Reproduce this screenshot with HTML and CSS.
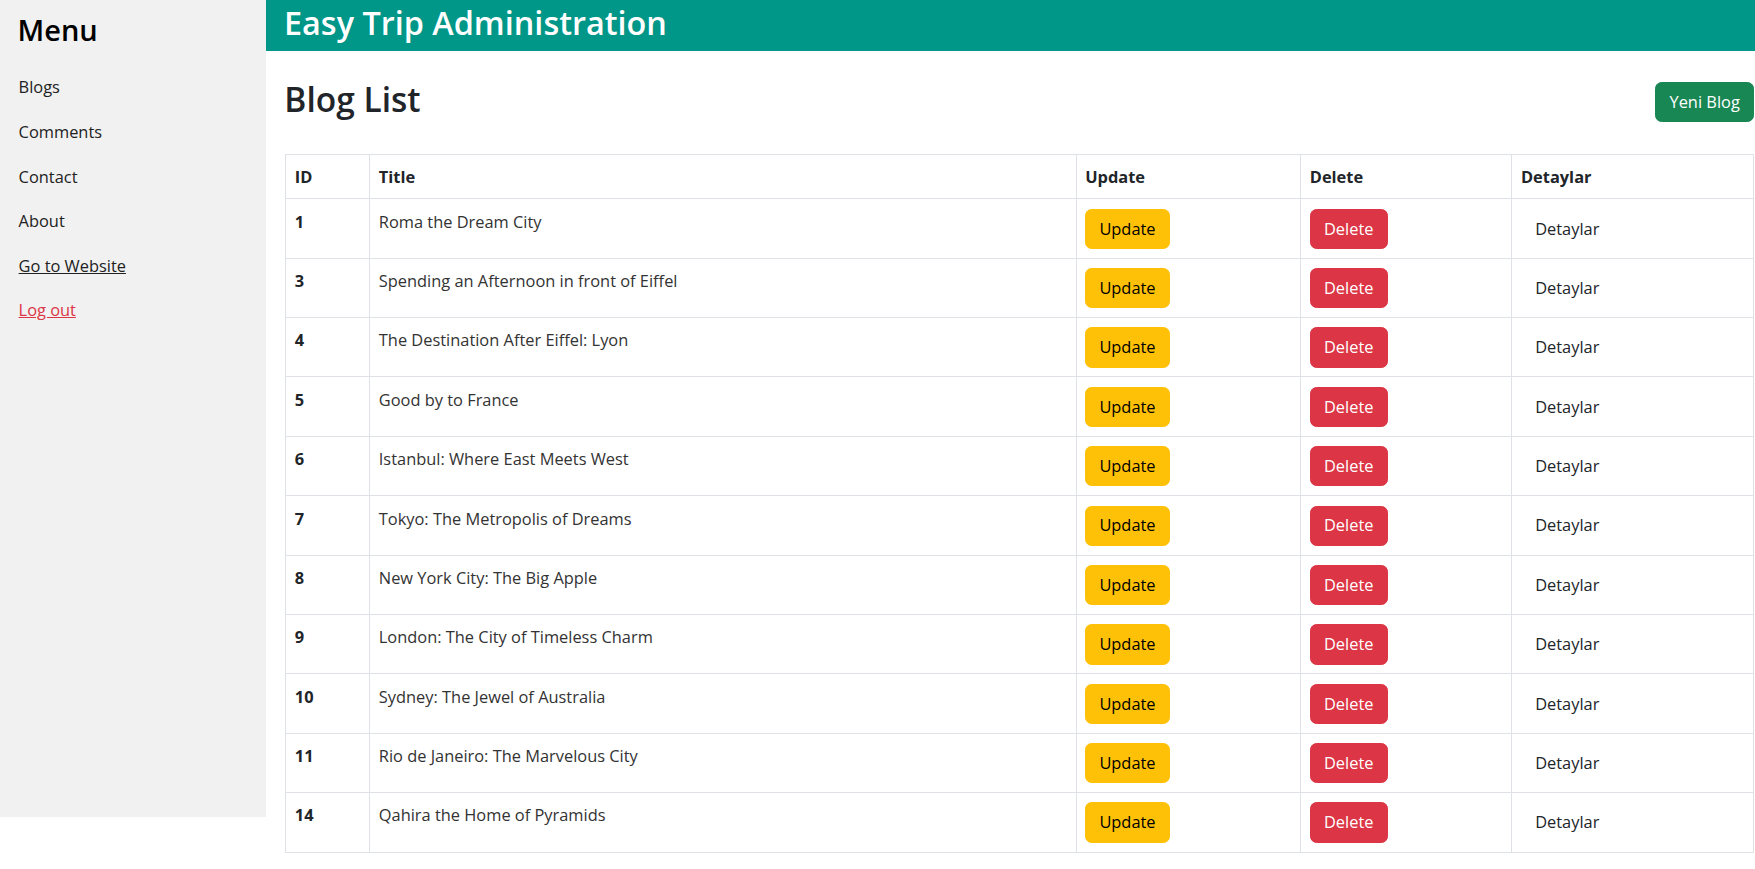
FILE: index.html
```html
<!DOCTYPE html>
<html lang="en">
<head>
<meta charset="utf-8">
<title>Easy Trip Administration</title>
<link rel="stylesheet" href="styles.css">
</head>
<body>
<nav class="sidebar">
  <h3 class="menu-title">Menu</h3>
  <a class="side-link" href="#">Blogs</a>
  <a class="side-link" href="#">Comments</a>
  <a class="side-link" href="#">Contact</a>
  <a class="side-link" href="#">About</a>
  <a class="side-link underline" href="#">Go to Website</a>
  <a class="side-link underline danger" href="#">Log out</a>
</nav>
<div class="main">
  <header class="topbar">
    <h1 class="topbar-title">Easy Trip Administration</h1>
  </header>
  <div class="content">
    <div class="page-head">
      <h2 class="page-title">Blog List</h2>
      <a class="btn btn-success btn-new" href="#">Yeni Blog</a>
    </div>
    <table class="grid">
      <colgroup>
        <col class="c-id"><col class="c-title"><col class="c-upd"><col class="c-del"><col class="c-det">
      </colgroup>
      <thead>
        <tr><th>ID</th><th>Title</th><th>Update</th><th>Delete</th><th>Detaylar</th></tr>
      </thead>
      <tbody>
        <tr><th>1</th><td>Roma the Dream City</td><td><a class="btn btn-warning" href="#">Update</a></td><td><a class="btn btn-danger" href="#">Delete</a></td><td><a class="btn btn-plain" href="#">Detaylar</a></td></tr>
        <tr><th>3</th><td>Spending an Afternoon in front of Eiffel</td><td><a class="btn btn-warning" href="#">Update</a></td><td><a class="btn btn-danger" href="#">Delete</a></td><td><a class="btn btn-plain" href="#">Detaylar</a></td></tr>
        <tr><th>4</th><td>The Destination After Eiffel: Lyon</td><td><a class="btn btn-warning" href="#">Update</a></td><td><a class="btn btn-danger" href="#">Delete</a></td><td><a class="btn btn-plain" href="#">Detaylar</a></td></tr>
        <tr><th>5</th><td>Good by to France</td><td><a class="btn btn-warning" href="#">Update</a></td><td><a class="btn btn-danger" href="#">Delete</a></td><td><a class="btn btn-plain" href="#">Detaylar</a></td></tr>
        <tr><th>6</th><td>Istanbul: Where East Meets West</td><td><a class="btn btn-warning" href="#">Update</a></td><td><a class="btn btn-danger" href="#">Delete</a></td><td><a class="btn btn-plain" href="#">Detaylar</a></td></tr>
        <tr><th>7</th><td>Tokyo: The Metropolis of Dreams</td><td><a class="btn btn-warning" href="#">Update</a></td><td><a class="btn btn-danger" href="#">Delete</a></td><td><a class="btn btn-plain" href="#">Detaylar</a></td></tr>
        <tr><th>8</th><td>New York City: The Big Apple</td><td><a class="btn btn-warning" href="#">Update</a></td><td><a class="btn btn-danger" href="#">Delete</a></td><td><a class="btn btn-plain" href="#">Detaylar</a></td></tr>
        <tr><th>9</th><td>London: The City of Timeless Charm</td><td><a class="btn btn-warning" href="#">Update</a></td><td><a class="btn btn-danger" href="#">Delete</a></td><td><a class="btn btn-plain" href="#">Detaylar</a></td></tr>
        <tr><th>10</th><td>Sydney: The Jewel of Australia</td><td><a class="btn btn-warning" href="#">Update</a></td><td><a class="btn btn-danger" href="#">Delete</a></td><td><a class="btn btn-plain" href="#">Detaylar</a></td></tr>
        <tr><th>11</th><td>Rio de Janeiro: The Marvelous City</td><td><a class="btn btn-warning" href="#">Update</a></td><td><a class="btn btn-danger" href="#">Delete</a></td><td><a class="btn btn-plain" href="#">Detaylar</a></td></tr>
        <tr><th>14</th><td>Qahira the Home of Pyramids</td><td><a class="btn btn-warning" href="#">Update</a></td><td><a class="btn btn-danger" href="#">Delete</a></td><td><a class="btn btn-plain" href="#">Detaylar</a></td></tr>
      </tbody>
    </table>
  </div>
</div>
</body>
</html>
```
FILE: styles.css
```css
* { box-sizing: border-box; }

html, body {
  margin: 0;
  padding: 0;
  background: #fff;
}

body {
  display: flex;
  align-items: flex-start;
  font-family: "Open Sans", "Noto Sans", sans-serif;
  font-size: 16.4px;
  color: #212529;
  min-height: 869px;
}

/* Sidebar */
.sidebar {
  flex: none;
  width: 266px;
  height: 817px;
  background: #f1f1f1;
  display: flex;
  flex-direction: column;
}

.menu-title {
  margin: 0 0 18.7px;
  padding: 12.7px 17.5px 0;
  font-size: 29px;
  line-height: 34px;
  font-weight: 600;
  color: #000;
}

.side-link {
  display: block;
  padding: 9.1px 18.6px;
  line-height: 26.4px;
  font-size: 16.4px;
  color: #222;
  text-decoration: none;
}

.side-link.underline { text-decoration: underline; }
.side-link.danger { color: #dc3545; }

/* Main area */
.main {
  flex: 1;
  min-width: 0;
}

.topbar {
  background: #009688;
  color: #fff;
  padding: 1.5px 18px 9.2px;
}

.topbar-title {
  margin: 0;
  font-size: 32.4px;
  line-height: 40px;
  font-weight: 600;
}

.content {
  padding: 27.4px 1px 0 19.3px;
}

.page-head {
  display: flex;
  justify-content: space-between;
  align-items: flex-start;
}

.page-title {
  margin: 0 0 0 -1px;
  font-size: 33.5px;
  line-height: 42px;
  font-weight: 600;
  color: #212529;
}

/* Buttons */
.btn {
  display: inline-flex;
  align-items: center;
  vertical-align: top;
  height: 40.3px;
  padding: 0 13.2px;
  border: 1px solid transparent;
  border-radius: 6.6px;
  font-size: 16.4px;
  line-height: 26.4px;
  text-decoration: none;
  white-space: nowrap;
}

.btn-new {
  margin-top: 3.6px;
  height: 40.6px;
}

.btn-success { background: #198754; border-color: #198754; color: #fff; }
.btn-warning { background: #ffc107; border-color: #ffc107; color: #000; }
.btn-danger  { background: #dc3545; border-color: #dc3545; color: #fff; }
.btn-plain   { background: transparent; color: #212529; }

/* Table */
.grid {
  margin-top: 32px;
  width: 1467.7px;
  table-layout: fixed;
  border-collapse: collapse;
  border: 1px solid #dee2e6;
}

.c-id { width: 84px; }
.c-title { width: 706.4px; }
.c-upd { width: 224.6px; }
.c-del { width: 211.2px; }
.c-det { width: 241.5px; }

.grid th,
.grid td {
  border: 1px solid #dee2e6;
  text-align: left;
  vertical-align: top;
  color: #212529;
}

.grid thead th {
  padding: 9px 8.5px 8px;
  line-height: 26px;
  font-weight: 700;
}

.grid tbody th,
.grid tbody td {
  padding: 9.3px 8.5px 8.8px;
  line-height: 26.4px;
}

.grid tbody th { font-weight: 700; }
.grid tbody td { font-weight: 400; color: #333; }
```
